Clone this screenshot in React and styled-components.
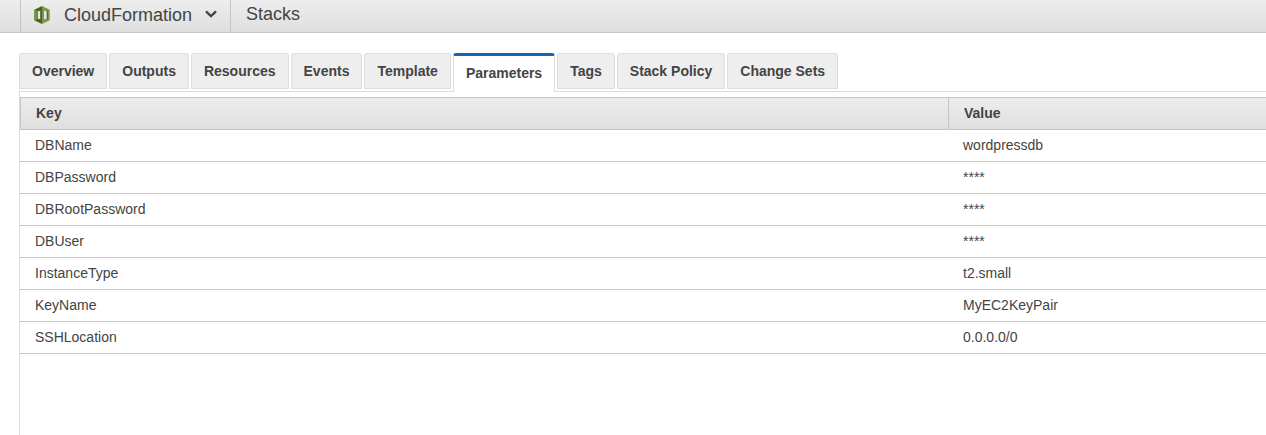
import React from "react";
import styled, { createGlobalStyle } from "styled-components";

const GlobalStyle = createGlobalStyle`
  * { box-sizing: border-box; }
  body {
    margin: 0;
    background: #fff;
    color: #444;
    font: 14px/20px "Liberation Sans", Arial, sans-serif;
  }
`;

const Page = styled.div`
  display: flex;
  flex-direction: column;
  height: 435px;
  overflow: hidden;
`;

const NavBar = styled.nav`
  display: flex;
  flex: none;
  height: 33px;
  padding-left: 20px;
  border-bottom: 1px solid #c5c5c5;
  background: linear-gradient(to bottom, #ededed, #dfdfdf);
  font-size: 18px;
`;

const ServiceMenu = styled.div`
  display: flex;
  width: 210px;
  padding: 5px 0 0 13px;
  border-left: 1px solid #c5c5c5;

  span { margin: 0 12px 0 13px; }
`;

const ServiceIcon = styled.svg`
  flex: none;
  width: 17px;
  height: 20px;
`;

const Chevron = styled.svg`
  flex: none;
  width: 14px;
  height: 10px;
  margin-top: 4px;
`;

const SectionTitle = styled.div`
  padding: 4px 15px 0;
  border-left: 1px solid #c5c5c5;
`;

const TabList = styled.div`
  display: flex;
  flex: none;
  gap: 2px;
  height: 59px;
  margin-left: 19px;
  padding-top: 20px;
  border-bottom: 1px solid #ddd;
`;

const Tab = styled.button`
  height: ${(p) => (p.$active ? 39 : 36)}px;
  padding: ${(p) => (p.$active ? "7px 12px 9px" : "7px 12px")};
  border: 1px solid #ddd;
  border-top: ${(p) => (p.$active ? "3px solid #1166bb" : "1px solid #ddd")};
  border-bottom: ${(p) => (p.$active ? "0" : "1px solid #ddd")};
  border-radius: 3px 3px 0 0;
  background: ${(p) => (p.$active ? "#fff" : "#eee")};
  color: inherit;
  font: bold 14px/20px "Liberation Sans", Arial, sans-serif;
  white-space: nowrap;
`;

const Panel = styled.main`
  flex: 1;
  margin-left: 19px;
  padding-top: 5px;
  border-left: 1px solid #ddd;
`;

const HeaderRow = styled.div`
  display: grid;
  grid-template-columns: 927px 1fr;
  height: 33px;
  border: solid #c5c5c5;
  border-width: 1px 0 1px 1px;
  background: linear-gradient(to bottom, #ededed, #dfdfdf);
  font-weight: bold;
`;

const HeaderCell = styled.div`
  padding: 5px 15px;
  border-left: ${(p) => (p.$divided ? "1px solid #c5c5c5" : "0")};
`;

const Row = styled.div`
  display: grid;
  grid-template-columns: 928px 1fr;
  height: 32px;
  border-bottom: 1px solid #c8c8c8;
`;

const Cell = styled.div`
  padding: 5px 15px;
`;

const tabs = [
  "Overview",
  "Outputs",
  "Resources",
  "Events",
  "Template",
  "Parameters",
  "Tags",
  "Stack Policy",
  "Change Sets",
];

const parameters = [
  ["DBName", "wordpressdb"],
  ["DBPassword", "****"],
  ["DBRootPassword", "****"],
  ["DBUser", "****"],
  ["InstanceType", "t2.small"],
  ["KeyName", "MyEC2KeyPair"],
  ["SSHLocation", "0.0.0.0/0"],
];

export default function App() {
  return (
    <Page>
      <GlobalStyle />
      <NavBar>
        <ServiceMenu>
          <ServiceIcon viewBox="0 0 17 20" aria-hidden="true">
            <path d="M8 1 .3 4.7v10.6L8 19z" fill="#4b612c" />
            <path d="M8 1l7.7 3.7v10.6L8 19z" fill="#759c3e" />
            <path d="M.3 4.7 2.8 5.2v9.6L.3 15.3z" fill="#759c3e" />
            <path d="M2.8 5.8 4 5.6v8.8l-1.2-.2z" fill="#66893a" />
            <path d="M4 6.2 6.2 5.8v8.4L4 13.8z" fill="#e6e6e6" />
            <path d="M10 5.8l2.8.5v7.4l-2.8.5z" fill="#e6e6e6" />
            <path d="M12.8 6v8l1 .3V5.7z" fill="#4b612c" />
          </ServiceIcon>
          <span>CloudFormation</span>
          <Chevron viewBox="0 0 14 10" aria-hidden="true">
            <path d="M2 2.3 7 7.1l5-4.8" fill="none" stroke="#444" strokeWidth="2.3" />
          </Chevron>
        </ServiceMenu>
        <SectionTitle>Stacks</SectionTitle>
      </NavBar>
      <TabList>
        {tabs.map((name) => (
          <Tab key={name} $active={name === "Parameters"}>
            {name}
          </Tab>
        ))}
      </TabList>
      <Panel>
        <HeaderRow>
          <HeaderCell>Key</HeaderCell>
          <HeaderCell $divided>Value</HeaderCell>
        </HeaderRow>
        {parameters.map(([key, value]) => (
          <Row key={key}>
            <Cell>{key}</Cell>
            <Cell>{value}</Cell>
          </Row>
        ))}
      </Panel>
    </Page>
  );
}
